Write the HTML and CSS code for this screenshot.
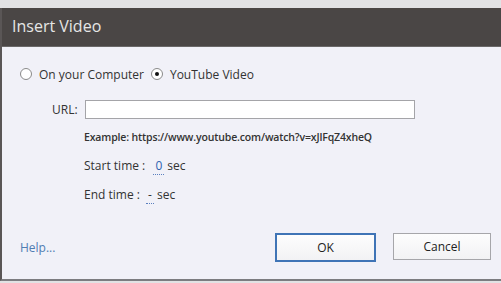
FILE: index.html
```html
<!DOCTYPE html>
<html lang="en">
<head>
    <meta charset="UTF-8">
    <meta name="viewport" content="width=device-width, initial-scale=1.0">
    <title>Insert Video</title>
    <link rel="stylesheet" href="styles.css">
</head>
<body>
    <div class="dialog">
        <div class="titlebar">Insert Video</div>
        <div class="content">
            <div class="source">
                <label class="option"><span class="radio"></span>On your Computer</label>
                <label class="option"><span class="radio checked"></span>YouTube Video</label>
            </div>
            <div class="url-row">
                <span class="url-label">URL:</span>
                <div class="url-input"></div>
            </div>
            <div class="details">
                <p class="example">Example: https://www.youtube.com/watch?v=xJlFqZ4xheQ</p>
                <p class="time">Start time : <span class="field">0</span> sec</p>
                <p class="time">End time : <span class="field dash">-</span> sec</p>
            </div>
            <div class="footer">
                <a class="help" href="#">Help...</a>
                <div class="buttons">
                    <button class="btn primary">OK</button>
                    <button class="btn">Cancel</button>
                </div>
            </div>
        </div>
    </div>
</body>
</html>
```

FILE: styles.css
```css
body {
    margin: 0;
    background-color: #e2e2e4;
    font-family: "Open Sans", "Noto Sans", sans-serif;
    color: #333;
}
.dialog {
    margin-top: 8px;
    border-left: 2px solid #5a5656;
    border-bottom: 2px solid #7c7c80;
    background-color: #f1f1f8;
}
.titlebar {
    background: #4a4645;
    color: #e6e6e6;
    font-size: 16px;
    height: 38px;
    line-height: 36px;
    padding-left: 10px;
    border-bottom: 1px solid #6a6868;
}
.content {
    height: 232px;
    display: flex;
    flex-direction: column;
    padding: 19px 0 0 0;
    box-sizing: border-box;
}
.source {
    display: flex;
    align-items: center;
    font-size: 12px;
    height: 16px;
    padding-left: 18px;
    gap: 7px;
}
.option {
    display: flex;
    align-items: center;
    gap: 7px;
}
.radio {
    width: 10px;
    height: 10px;
    border: 1px solid #8a8a8a;
    border-radius: 50%;
    background: #fff;
    display: flex;
    align-items: center;
    justify-content: center;
}
.radio.checked::after {
    content: "";
    width: 4px;
    height: 4px;
    border-radius: 50%;
    background: #111;
}
.url-row {
    display: flex;
    align-items: center;
    margin-top: 18px;
    padding-left: 50px;
    font-size: 12px;
}
.url-label {
    width: 28px;
}
.url-input {
    width: 328px;
    height: 17px;
    margin-left: 5px;
    border: 1px solid #a4a4a8;
    background: #fff;
}
.details {
    padding-left: 82px;
    margin-top: 10px;
}
.details p {
    margin: 0;
}
.example {
    font-size: 10.5px;
    font-weight: 600;
    letter-spacing: -0.15px;
    height: 16px;
    line-height: 16px;
}
.time {
    font-size: 12px;
    height: 16px;
    line-height: 16px;
    margin-top: 13px !important;
}
.field {
    color: #2f62b0;
    border-bottom: 1px dotted #5a7fbf;
    padding: 0 2px;
    margin-left: 5px;
}
.field.dash {
    color: #333;
    margin-left: 3px;
}
.footer {
    display: flex;
    justify-content: space-between;
    align-items: center;
    margin-top: auto;
    margin-bottom: 17px;
    padding: 0 10px 0 18px;
}
.help {
    color: #4f7db3;
    font-size: 12px;
    text-decoration: none;
}
.buttons {
    display: flex;
    gap: 17px;
}
.btn {
    font-family: "Open Sans", "Noto Sans", sans-serif;
    font-size: 12px;
    color: #222;
    width: 98px;
    height: 27px;
    background: linear-gradient(#fdfdfd, #f2f2f4);
    border: 1px solid #a6a6aa;
    padding: 0;
}
.btn.primary {
    width: 101px;
    height: 29px;
    border: 2px solid #3f74b6;
}
```
